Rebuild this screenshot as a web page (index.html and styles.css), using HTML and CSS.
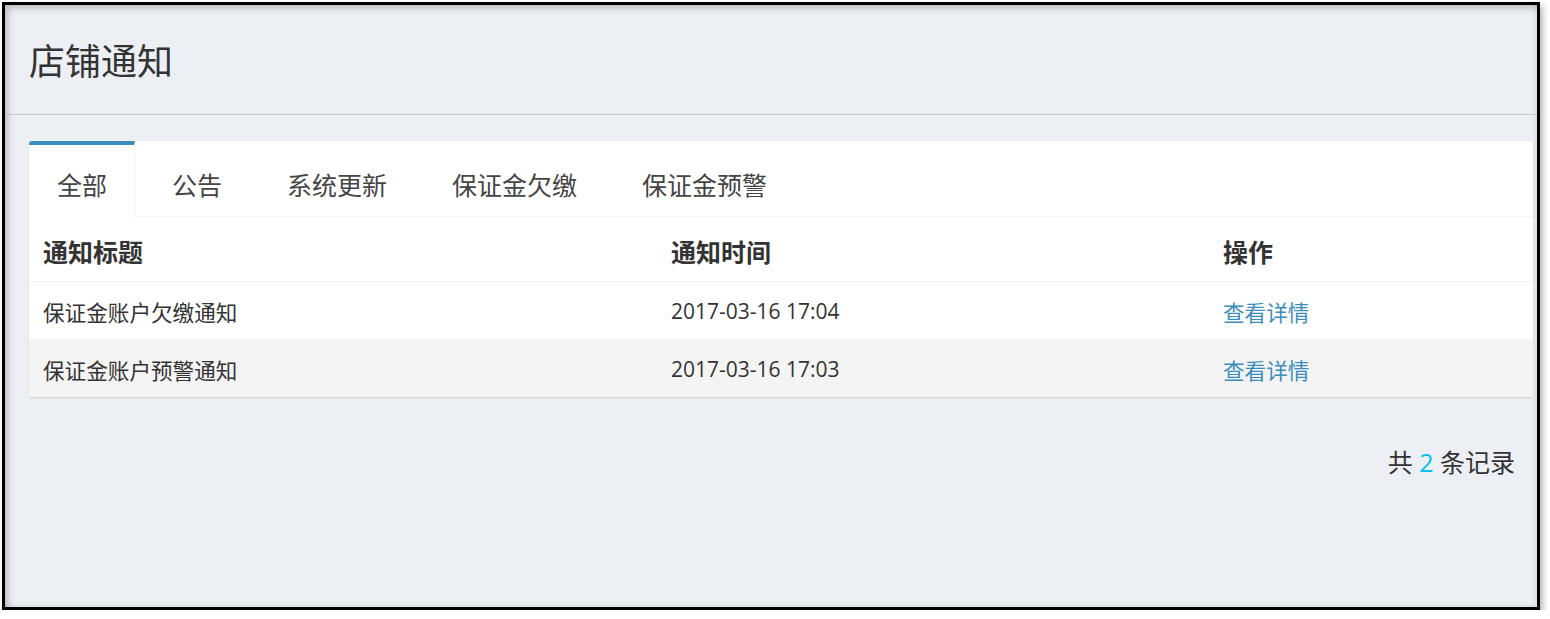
FILE: index.html
```html
<!DOCTYPE html>
<html lang="zh-CN">
<head>
<meta charset="utf-8">
<title>店铺通知</title>
<link rel="stylesheet" href="styles.css">
</head>
<body>
<div class="frame">
  <div class="page-header">
    <h1 class="page-title">店铺通知</h1>
  </div>
  <div class="content">
    <div class="card">
      <ul class="tabs">
        <li class="tab active"><a>全部</a></li>
        <li class="tab"><a>公告</a></li>
        <li class="tab"><a>系统更新</a></li>
        <li class="tab"><a>保证金欠缴</a></li>
        <li class="tab"><a>保证金预警</a></li>
      </ul>
      <table class="list">
        <colgroup>
          <col class="c1"><col class="c2"><col class="c3">
        </colgroup>
        <thead>
          <tr><th>通知标题</th><th>通知时间</th><th>操作</th></tr>
        </thead>
        <tbody>
          <tr><td>保证金账户欠缴通知</td><td class="num">2017-03-16 17:04</td><td><a class="link">查看详情</a></td></tr>
          <tr class="odd"><td>保证金账户预警通知</td><td class="num">2017-03-16 17:03</td><td><a class="link">查看详情</a></td></tr>
        </tbody>
      </table>
    </div>
    <div class="summary">共 <span class="count">2</span> 条记录</div>
  </div>
</div>
</body>
</html>
```
FILE: styles.css
```css
html, body {
  margin: 0;
  padding: 0;
  background: #ffffff;
}
body {
  font-family: "Open Sans", "Noto Sans CJK SC", sans-serif;
  color: #333333;
}
.frame {
  margin: 2px 0 0 2px;
  width: 1538px;
  height: 608px;
  box-sizing: border-box;
  border: 3px solid #000000;
  background: #ecf0f5;
  box-shadow: 3px 4px 6px rgba(0, 0, 0, 0.28),
              inset 5px 5px 7px -2px rgba(0, 0, 0, 0.22),
              inset -2px -2px 4px rgba(0, 0, 0, 0.08);
  overflow: hidden;
}
.page-header {
  height: 109px;
  border-bottom: 1px solid #c3c7cc;
  padding: 0 24px;
  display: flex;
  align-items: center;
}
.page-title {
  margin: 0;
  padding-top: 4px;
  font-size: 36px;
  font-weight: normal;
  line-height: 40px;
  color: #333333;
}
.content {
  padding: 26px 4px 0 24px;
}
.card {
  background: #ffffff;
  border-radius: 3px;
  box-shadow: 0 1px 2px rgba(0, 0, 0, 0.14);
  overflow: hidden;
}
.tabs {
  list-style: none;
  margin: 0;
  padding: 0;
  display: flex;
  border-bottom: 1px solid #f2f2f2;
}
.tab {
  margin-right: 9px;
  margin-bottom: -1px;
}
.tab a {
  display: flex;
  align-items: center;
  box-sizing: border-box;
  height: 76px;
  padding: 6px 28px 0 28px;
  border-top: 4px solid transparent;
  border-bottom: 1px solid transparent;
  font-size: 25px;
  color: #444444;
}
.tab.active a {
  border-top-color: #3c8dbc;
  border-right: 1px solid #f2f2f2;
  padding-right: 27px;
  background: #ffffff;
  border-bottom-color: #ffffff;
  color: #444444;
}
.list {
  width: 100%;
  border-collapse: collapse;
  table-layout: fixed;
}
.c1 { width: 628px; }
.c2 { width: 552px; }
.c3 { width: auto; }
.list th {
  text-align: left;
  font-size: 25px;
  font-weight: bold;
  height: 64px;
  padding: 4px 14px 0 14px;
  box-sizing: border-box;
  border-bottom: 1px solid #f2f2f2;
  color: #333333;
}
.list td {
  height: 58px;
  padding: 2px 14px 0 14px;
  box-sizing: border-box;
  font-size: 21.6px;
  color: #333333;
}
.list td.num {
  font-size: 21px;
}
.list tr.odd td {
  background: #f4f4f4;
}
.link {
  color: #3c8dbc;
}
.summary {
  margin-top: 48px;
  padding-right: 18px;
  text-align: right;
  font-size: 25px;
  line-height: 34px;
  color: #333333;
}
.count {
  color: #00c0ef;
}
```
